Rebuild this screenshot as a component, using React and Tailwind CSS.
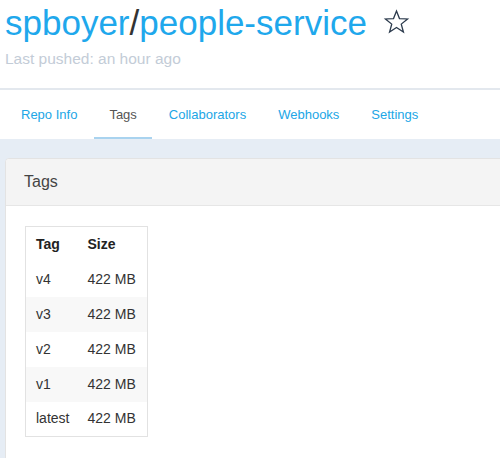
const tabs = ['Repo Info', 'Tags', 'Collaborators', 'Webhooks', 'Settings'];

const rows = [
  { tag: 'v4', size: '422 MB' },
  { tag: 'v3', size: '422 MB' },
  { tag: 'v2', size: '422 MB' },
  { tag: 'v1', size: '422 MB' },
  { tag: 'latest', size: '422 MB' },
];

function StarIcon() {
  return (
    <svg className="w-[27px] h-[26px]" viewBox="0 0 24 24" fill="none" stroke="#2b3a4c" strokeWidth="1.2" strokeLinejoin="miter">
      <path d="M12 1.8l2.75 7.05 7.45.35-5.8 4.75 2 7.3L12 17.1l-6.4 4.15 2-7.3-5.8-4.75 7.45-.35z" />
    </svg>
  );
}

export default function App() {
  return (
    <div className="w-[500px] h-[458px] overflow-hidden bg-white font-['Liberation_Sans',Arial,sans-serif]">
      {/* Repo header */}
      <div className="px-[5px] pt-[3px]">
        <div className="flex items-center">
          <h1 className="text-[35px] leading-[40px] text-[#1fa8ec]">
            spboyer<span className="text-[#333]">/</span>people-service
          </h1>
          <span className="ml-[16px] mt-[-2px]">
            <StarIcon />
          </span>
        </div>
        <p className="mt-[6px] text-[15.5px] leading-[20px] text-[#c3ccd7]">Last pushed: an hour ago</p>
      </div>

      {/* Tabs */}
      <nav className="mt-[19px] border-t-2 border-[#e3e8ee] flex gap-[2px] pl-[6px] h-[51px]">
        {tabs.map((t) => (
          <button
            key={t}
            className={
              t === 'Tags'
                ? 'px-[15px] text-[13px] text-[#555] border-b-[2px] border-[#a9d3ef] pt-[2px]'
                : 'px-[15px] text-[13px] text-[#21a6e6]'
            }
          >
            {t}
          </button>
        ))}
      </nav>

      {/* Content */}
      <main className="bg-[#e6edf5] pt-[19px] pl-[5px] h-full">
        <div className="mr-[-20px] bg-white border border-[#e3e3e3] rounded-tl-[4px]">
          <div className="h-[47px] bg-[#f4f4f4] border-b border-[#e6e6e6] rounded-tl-[4px] flex items-center px-[18px]">
            <h2 className="text-[16px] text-[#444]">Tags</h2>
          </div>
          <div className="pt-[20px] pl-[19px] pb-[40px]">
            <table className="border border-[#e2e2e2] text-[14px] text-[#333] border-collapse">
              <thead>
                <tr className="h-[35px]">
                  <th className="text-left font-bold text-[#222] pl-[10px] pr-[18px]">Tag</th>
                  <th className="text-left font-bold text-[#222] pr-[11px]">Size</th>
                </tr>
              </thead>
              <tbody>
                {rows.map((r, i) => (
                  <tr key={r.tag} className={i % 2 === 1 ? 'h-[35px] bg-[#f8f8f8]' : 'h-[35px]'}>
                    <td className="pl-[10px] pr-[18px]">{r.tag}</td>
                    <td className="pr-[11px]">{r.size}</td>
                  </tr>
                ))}
              </tbody>
            </table>
          </div>
        </div>
      </main>
    </div>
  );
}
